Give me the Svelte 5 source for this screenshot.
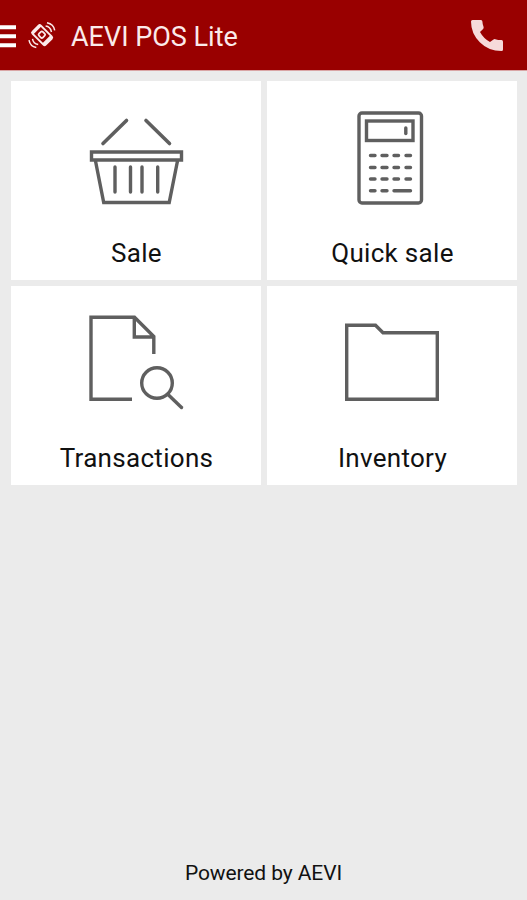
<script>
  const tiles = [
    { id: 'sale', label: 'Sale' },
    { id: 'quick', label: 'Quick sale' },
    { id: 'transactions', label: 'Transactions' },
    { id: 'inventory', label: 'Inventory' }
  ];
</script>

<div class="screen">
  <header>
    <svg class="menu" width="16" height="24" viewBox="0 0 16 24" aria-label="Menu">
      <path d="M0 2.2H16M0 11.2H16M0 20.2H16" stroke="#fff" stroke-width="4" />
    </svg>
    <svg class="logo" width="30" height="30" viewBox="0 0 30 30" fill="none" stroke="#fbeaea">
      <g transform="rotate(-45 15 15)">
        <rect x="9.2" y="6" width="11.6" height="18.4" rx="1.6" stroke-width="2" />
        <path d="M9.2 7H20.8M9.2 22.6H20.8" stroke-width="3" />
        <rect x="12.4" y="12" width="5.4" height="5.4" rx="1.4" stroke-width="1.8" />
      </g>
      <path d="M18.6 6.1Q23.3 6.6 24.5 12M20 2.8Q26.6 4.2 27.7 10.3M11.2 24.6Q6.3 23.6 5.5 18.8M9.3 27.6Q3.2 26.6 2 20.2" stroke-width="1.5" />
    </svg>
    <h1>AEVI POS Lite</h1>
    <svg class="phone" width="32" height="31" viewBox="0 0 32 31" aria-label="Call">
      <path fill="#f6dada" d="M1.5 0H10Q11.3 0 11.4 1.5Q11.5 4.5 12.6 7Q12.9 8 12.1 8.9L9 12Q12.5 18.5 19 22L22.5 19.5Q23.3 18.9 24.3 19.2Q27 20 30.5 20.1Q32 20.2 32 21.7V29.5Q32 31 30.5 31Q17.5 31 8.8 22.2Q0 13.5 0 1.5Q0 0 1.5 0Z" />
    </svg>
  </header>

  <main>
    {#each tiles as tile (tile.id)}
      <button class="tile">
        <svg width="250" height="140" viewBox="0 0 250 140" fill="none" stroke="#5f5f5f" stroke-width="3.4">
          {#if tile.id === 'sale'}
            <path d="M92 62.5L115.5 39.5M135 39.5L158.5 62.5" stroke-width="3.6" stroke-linecap="round" />
            <path d="M80.5 71H170.5V79H80.5ZM84.5 80L92.7 121.5H158.2L166.5 80" />
            <path d="M104 86V111M119.5 86V111M131 86V111M146.7 86V111" stroke-linecap="round" />
          {:else if tile.id === 'quick'}
            <rect x="92" y="32" width="62.5" height="90" rx="3" />
            <rect x="99.5" y="40" width="46.5" height="19.5" />
            <path d="M138.8 47V52.5" stroke-linecap="round" />
            <path d="M103.5 74.5H108M115 74.5H120M127 74.5H131.5M139 74.5H143.5M103.5 86.5H108M115 86.5H120M127 86.5H131.5M139 86.5H143.5M103.5 98H108M115 98H120M127 98H131.5M139 98H143.5M103.5 109.7H108M115 109.7H120M127 109.7H143.5" stroke-linecap="round" />
          {:else if tile.id === 'transactions'}
            <path d="M121 113.2H80V31.3H123.5L142.8 50.5V68M123.3 31.5V51H143" />
            <circle cx="146" cy="97" r="15.3" />
            <path d="M157 108.5L170.5 121.5" stroke-linecap="round" />
          {:else}
            <path d="M79.7 39.3H108.5L116 46.8H170.3V113.2H79.7Z" />
          {/if}
        </svg>
        <span>{tile.label}</span>
      </button>
    {/each}
  </main>

  <footer>Powered by AEVI</footer>
</div>

<style>
  .screen {
    box-sizing: border-box;
    width: 527px;
    height: 900px;
    display: flex;
    flex-direction: column;
    background: #ebebeb;
    color: #111;
    font-family: Roboto, sans-serif;
    overflow: hidden;
  }
  header {
    height: 70px;
    flex: none;
    display: flex;
    align-items: center;
    background: #990000;
    border-bottom: 1px solid #d9a5a5;
    box-sizing: content-box;
  }
  .menu { margin-top: 4px; }
  .logo { margin-left: 11px; }
  h1 {
    margin: 4px 0 0 14px;
    font-size: 27px;
    line-height: 32px;
    font-weight: 400;
    color: #fbeaea;
    white-space: nowrap;
  }
  .phone { margin: 1px 24px 0 auto; }
  main {
    display: grid;
    grid-template-columns: 250px 250px;
    grid-auto-rows: 199px;
    gap: 6px;
    padding: 10px 10px 0 11px;
  }
  .tile {
    display: flex;
    flex-direction: column;
    align-items: center;
    padding: 0;
    border: 0;
    background: #fff;
    color: #111;
    font: 400 26px/32px Roboto, sans-serif;
  }
  .tile svg { flex: none; }
  .tile span { margin: 16px 0 0 1px; letter-spacing: 0.3px; }
  footer {
    margin-top: auto;
    padding-bottom: 15px;
    font-size: 21px;
    line-height: 24px;
    letter-spacing: -0.1px;
    text-align: center;
  }
</style>
